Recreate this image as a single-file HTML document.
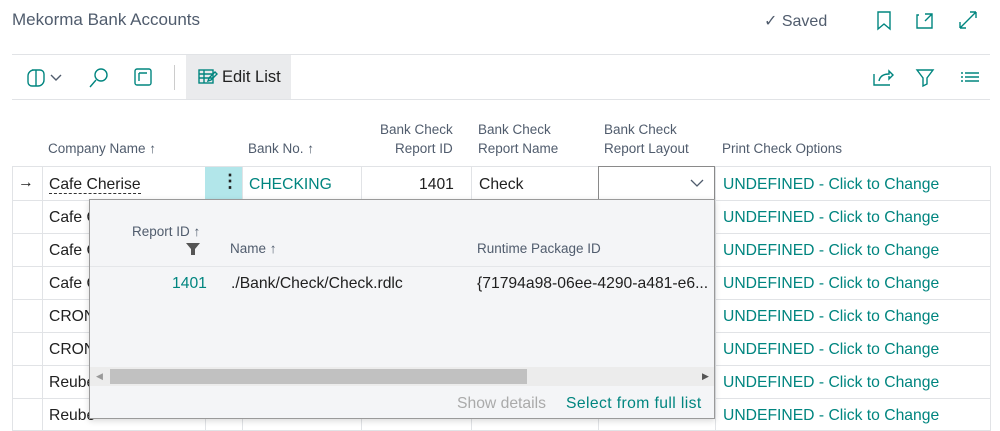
<!DOCTYPE html>
<html><head><style>
*{margin:0;padding:0;box-sizing:border-box}
body{width:1000px;height:431px;overflow:hidden;background:#fff;font-family:"Liberation Sans",sans-serif;color:#212121;position:relative}
.a{position:absolute;white-space:nowrap}
.h{font-size:13.5px;color:#505c6d;line-height:19px}
.c{font-size:15.7px}
.t{color:#00857f}
.hl{position:absolute;height:1px;background:#e1e3e6}
.vl{position:absolute;width:1px;background:#e1e3e6}
</style></head><body>
<div class="a" style="left:12px;top:10px;font-size:17px;color:#505c6d">Mekorma Bank Accounts</div>
<div class="a" style="left:764px;top:11px;font-size:16px;color:#505c6d">✓ Saved</div>
<svg class="a" style="left:875px;top:11px" width="110" height="20" fill="none" stroke="#00857f" stroke-width="1.4">
<path d="M3 1h12v17l-6-5-6 5z"/>
<path d="M44 4h-2v13h15V8M50 3h7v7M57 3l-7 7"/>
<path d="M85 17L101 1M85 17v-6M85 17h6M101 1h-6M101 1v6"/>
</svg>
<div class="hl" style="left:12px;top:54px;width:978px"></div>
<svg class="a" style="left:24px;top:66px" width="140" height="24" fill="none" stroke="#00857f" stroke-width="1.4">
<path d="M8 4h8a4 4 0 0 1 4 4v6a6 6 0 0 1-6 6H8a4 4 0 0 1-4-4V10a6 6 0 0 1 6-6zM12 4v16"/>
<path d="M27 9l5 5 5-5" stroke="#505c6d"/>
<circle cx="77" cy="9" r="6"/><path d="M72 14l-6 7"/>
<rect x="111" y="3" width="16" height="16" rx="2"/><path d="M115 7h8M115 7v8"/>
</svg>
<div class="vl" style="left:174px;top:65px;height:25px;background:#ccc"></div>
<div class="a" style="left:186px;top:55px;width:105px;height:44px;background:#eaebed"></div>
<svg class="a" style="left:198px;top:69px" width="20" height="18" fill="none" stroke="#00857f" stroke-width="1.4"><rect x="1" y="1" width="14" height="13"/><path d="M1 5h14M1 9h14M6 1v13M11 9l6-6 2 2-6 6-3 1z"/></svg>
<div class="a" style="left:222px;top:68px;font-size:16.5px">Edit List</div>
<svg class="a" style="left:872px;top:66px" width="110" height="22" fill="none" stroke="#00857f" stroke-width="1.4">
<path d="M2 8v11h16M7 15c1-5 5-7 10-7V5l4 4-4 4V10"/>
<path d="M45 4h16l-6 8v6l-4 2v-8z"/>
<path d="M89 7h2M93 7h14M89 11h2M93 11h14M89 15h2M93 15h14"/>
</svg>
<div class="hl" style="left:12px;top:99px;width:978px"></div>
<div class="a h" style="left:48px;top:139px">Company Name ↑</div>
<div class="a h" style="left:248px;top:139px">Bank No. ↑</div>
<div class="a h" style="left:380px;top:120px;text-align:right">Bank Check<br>Report ID</div>
<div class="a h" style="left:478px;top:120px">Bank Check<br>Report Name</div>
<div class="a h" style="left:604px;top:120px">Bank Check<br>Report Layout</div>
<div class="a h" style="left:722px;top:139px">Print Check Options</div>
<div class="hl" style="left:12px;top:166px;width:978px"></div>
<div class="hl" style="left:12px;top:200px;width:978px"></div>
<div class="hl" style="left:12px;top:233px;width:978px"></div>
<div class="hl" style="left:12px;top:266px;width:978px"></div>
<div class="hl" style="left:12px;top:299px;width:978px"></div>
<div class="hl" style="left:12px;top:332px;width:978px"></div>
<div class="hl" style="left:12px;top:365px;width:978px"></div>
<div class="hl" style="left:12px;top:398px;width:978px"></div>
<div class="hl" style="left:12px;top:430px;width:978px"></div>
<div class="vl" style="left:12px;top:166px;height:265px"></div>
<div class="vl" style="left:42px;top:166px;height:265px"></div>
<div class="vl" style="left:205px;top:166px;height:265px"></div>
<div class="vl" style="left:242px;top:166px;height:265px"></div>
<div class="vl" style="left:361px;top:166px;height:265px"></div>
<div class="vl" style="left:471px;top:166px;height:265px"></div>
<div class="vl" style="left:598px;top:166px;height:265px"></div>
<div class="vl" style="left:715px;top:166px;height:265px"></div>
<div class="vl" style="left:990px;top:166px;height:265px"></div>
<div class="a" style="left:205px;top:167px;width:37px;height:33px;background:#b2e6ea"></div>
<div class="a" style="left:221px;top:171px;font-size:18px;font-weight:bold">⋮</div>
<div class="a c" style="left:18px;top:174px">→</div>
<div class="a c" style="left:49px;top:176px;border-bottom:1px dashed #333;line-height:17px">Cafe Cherise</div>
<div class="a c t" style="left:249px;top:176px">CHECKING</div>
<div class="a c" style="left:419px;top:176px">1401</div>
<div class="a c" style="left:479px;top:176px">Check</div>
<div class="a" style="left:598px;top:166px;width:117px;height:35px;border:1px solid #8a8a8a"></div>
<svg class="a" style="left:690px;top:178px" width="14" height="10" fill="none" stroke="#505c6d" stroke-width="1.3"><path d="M1 2l6 6 6-6"/></svg>
<div class="a c" style="left:49px;top:209px">Cafe C</div>
<div class="a c" style="left:49px;top:242px">Cafe C</div>
<div class="a c" style="left:49px;top:275px">Cafe C</div>
<div class="a c" style="left:49px;top:308px">CRON</div>
<div class="a c" style="left:49px;top:341px">CRON</div>
<div class="a c" style="left:49px;top:374px">Reube</div>
<div class="a c" style="left:49px;top:407px">Reube</div>
<div class="a c t" style="left:723px;top:176px">UNDEFINED - Click to Change</div>
<div class="a c t" style="left:723px;top:209px">UNDEFINED - Click to Change</div>
<div class="a c t" style="left:723px;top:242px">UNDEFINED - Click to Change</div>
<div class="a c t" style="left:723px;top:275px">UNDEFINED - Click to Change</div>
<div class="a c t" style="left:723px;top:308px">UNDEFINED - Click to Change</div>
<div class="a c t" style="left:723px;top:341px">UNDEFINED - Click to Change</div>
<div class="a c t" style="left:723px;top:374px">UNDEFINED - Click to Change</div>
<div class="a c t" style="left:723px;top:407px">UNDEFINED - Click to Change</div>
<div class="a" style="left:89px;top:199px;width:626px;height:220px;background:#f4f5f7;border:1px solid #9a9a9a;box-shadow:0 2px 6px rgba(0,0,0,.15)">
<div class="a h" style="left:42px;top:22px">Report ID ↑</div>
<svg class="a" style="left:96px;top:43px" width="14" height="12"><path d="M0 0h14l-5 6v6H5V6z" fill="#555"/></svg>
<div class="a h" style="left:140px;top:39px">Name ↑</div>
<div class="a h" style="left:387px;top:39px">Runtime Package ID</div>
<div class="hl" style="left:0;top:66px;width:624px;background:#e4e6e9"></div>
<div class="a c t" style="left:82px;top:75px">1401</div>
<div class="a c" style="left:141px;top:75px">./Bank/Check/Check.rdlc</div>
<div class="a c" style="left:387px;top:75px">{71794a98-06ee-4290-a481-e6...</div>
<div class="a" style="left:0;top:167px;width:624px;height:19px;background:#ececec"></div>
<div class="a" style="left:20px;top:169px;width:417px;height:15px;background:#c1c1c1"></div>
<div class="a" style="left:6px;top:171px;font-size:9px;color:#999">◀</div>
<div class="a" style="left:612px;top:171px;font-size:9px;color:#555">▶</div>
<div class="a c" style="left:367px;top:195px;color:#aaa">Show details</div>
<div class="a c t" style="left:476px;top:195px;letter-spacing:0.4px">Select from full list</div>
</div>
</body></html>
